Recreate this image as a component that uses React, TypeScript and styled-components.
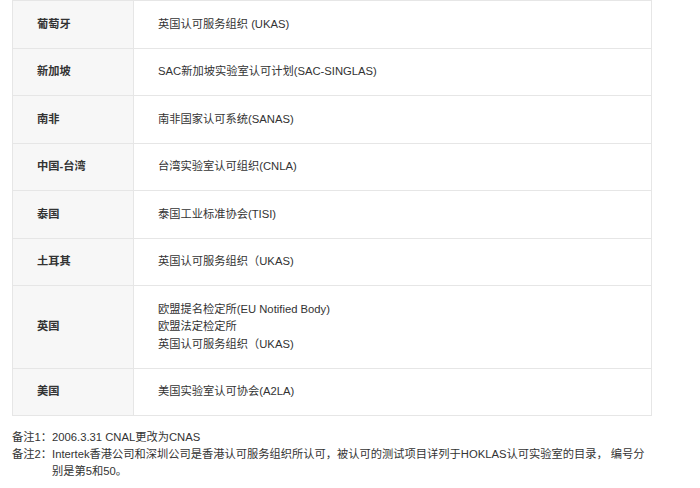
import styled, { createGlobalStyle } from "styled-components";

const GlobalStyle = createGlobalStyle`
  body {
    margin: 0;
    background: #fff;
    font-family: "Liberation Sans", "Noto Sans CJK SC", sans-serif;
    color: #333;
  }
`;

interface Row {
  region: string;
  bodies: string[];
}

const rows: Row[] = [
  { region: "葡萄牙", bodies: ["英国认可服务组织 (UKAS)"] },
  { region: "新加坡", bodies: ["SAC新加坡实验室认可计划(SAC-SINGLAS)"] },
  { region: "南非", bodies: ["南非国家认可系统(SANAS)"] },
  { region: "中国-台湾", bodies: ["台湾实验室认可组织(CNLA)"] },
  { region: "泰国", bodies: ["泰国工业标准协会(TISI)"] },
  { region: "土耳其", bodies: ["英国认可服务组织（UKAS)"] },
  {
    region: "英国",
    bodies: [
      "欧盟提名检定所(EU Notified Body)",
      "欧盟法定检定所",
      "英国认可服务组织（UKAS)",
    ],
  },
  { region: "美国", bodies: ["美国实验室认可协会(A2LA)"] },
];

const Page = styled.div`
  padding: 0 12px;
  width: 640px;
`;

const Table = styled.table`
  width: 640px;
  border-collapse: collapse;
  table-layout: fixed;
  font-size: 11.25px;
  line-height: 17.5px;
`;

const RegionCell = styled.td`
  box-sizing: border-box;
  width: 121px;
  padding: 14.5px 24px;
  background: #f7f7f7;
  border: 1px solid #e6e6e6;
  font-weight: bold;
  color: #333;
`;

const BodyCell = styled.td`
  padding: 14.5px 24px;
  border: 1px solid #e6e6e6;
  color: #333;
`;

const Notes = styled.div`
  margin-top: 13px;
  font-size: 11.25px;
  line-height: 17px;
  color: #333;
`;

const Note = styled.div`
  display: grid;
  grid-template-columns: auto 1fr;
`;

const Label = styled.span`
  white-space: nowrap;
`;

export default function App() {
  return (
    <>
      <GlobalStyle />
      <Page>
        <Table>
          <tbody>
            {rows.map((r) => (
              <tr key={r.region}>
                <RegionCell>{r.region}</RegionCell>
                <BodyCell>
                  {r.bodies.map((b) => (
                    <div key={b}>{b}</div>
                  ))}
                </BodyCell>
              </tr>
            ))}
          </tbody>
        </Table>
        <Notes>
          <Note>
            <Label>备注1：</Label>
            <span>2006.3.31 CNAL更改为CNAS</span>
          </Note>
          <Note>
            <Label>备注2：</Label>
            <span>
              Intertek香港公司和深圳公司是香港认可服务组织所认可，被认可的测试项目详列于HOKLAS认可实验室的目录，
              编号分别是第5和50。
            </span>
          </Note>
        </Notes>
      </Page>
    </>
  );
}
